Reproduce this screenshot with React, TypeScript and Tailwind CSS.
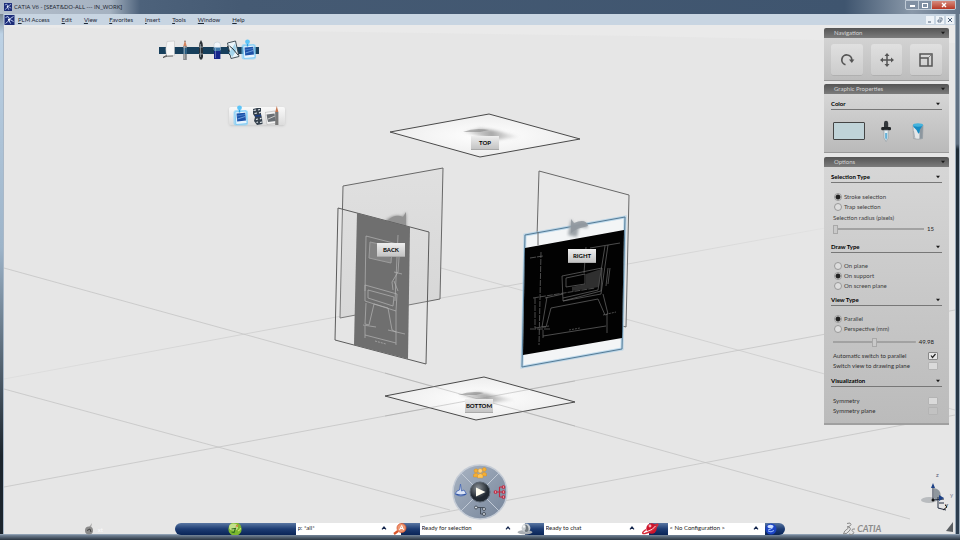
import React from 'react';

type Point = { x: number; y: number };

const SCENE = { x: 4, y: 25, width: 951, height: 509 };

const MENUS = ['PLM Access', 'Edit', 'View', 'Favorites', 'Insert', 'Tools', 'Window', 'Help'];

const PLANE_LABELS = [
    { name: 'TOP', x: 471, y: 136 },
    { name: 'BACK', x: 377, y: 243 },
    { name: 'RIGHT', x: 568, y: 249 },
    { name: 'BOTTOM', x: 465, y: 399 },
];

const place = ({ x, y }: Point) => ({
    left: `${((x - SCENE.x) / SCENE.width) * 100}%`,
    top: `${((y - SCENE.y) / SCENE.height) * 100}%`,
});

/* ---------- icons ---------- */

const AppIcon = () => (
    <svg viewBox="0 0 10 10" className="h-full w-full" aria-hidden="true">
        <rect width="10" height="10" fill="#1c2c78" />
        <path d="M1 2.5L3.5 1.5L5 4L9 1.5M1 8.500L4.500 5.500L6 8.500M5.500 4.500L9 6.500" fill="none" stroke="#b9c8ee" strokeWidth="1" />
        <circle cx="4.5" cy="4.8" r="1.1" fill="#fff" />
    </svg>
);

const PaperIcon = () => (
    <svg viewBox="0 0 16 22" className="h-[22px] w-4" aria-hidden="true">
        <path d="M6 2.500L13.500 2V16.500L5.500 17.500Q4 9 6 2.500Z" fill="#f6f6f6" stroke="#bdbdbd" strokeWidth=".5" />
        <path d="M2 18.5Q6 16.500 12 17M2 18.5L6 16" fill="none" stroke="#333" strokeWidth=".7" />
    </svg>
);

const PencilIcon = () => (
    <svg viewBox="0 0 16 22" className="h-[22px] w-4" aria-hidden="true">
        <path d="M8 1L9.8 7.500H6.2Z" fill="#d2825c" />
        <path d="M8 1L8.5 3H7.5Z" fill="#444" />
        <rect x="6.2" y="7" width="3.6" height="14" fill="#85888b" />
        <rect x="6.2" y="9" width="3.6" height="6" fill="#245a80" />
        <path d="M7.3 7V20" stroke="#c4c4c4" strokeWidth=".7" />
    </svg>
);

const PenIcon = () => (
    <svg viewBox="0 0 16 22" className="h-[22px] w-4" aria-hidden="true">
        <path d="M8 1L9.500 4L10 8V18L9 20.5H7L6 18V8L6.500 4Z" fill="#2b3238" />
        <path d="M7.500 5V18" stroke="#8d989f" strokeWidth=".8" />
        <path d="M6 8H10M6 15H10" stroke="#a9b4bc" strokeWidth=".7" />
    </svg>
);

const EraserIcon = () => (
    <svg viewBox="0 0 16 22" className="h-[22px] w-4" aria-hidden="true">
        <path d="M5 11V5.500Q5 3 8.200 3T11.400 5.500V11Z" fill="#f2f6fa" stroke="#b9c5cf" strokeWidth=".5" />
        <path d="M5 8.500H11.400V13H5Z" fill="#3f78a8" />
        <path d="M5 12H11.400V20H5Z" fill="#16268c" />
        <path d="M6.500 9V19" stroke="#fff" strokeOpacity=".3" />
    </svg>
);

const NotebookIcon = () => (
    <svg viewBox="0 0 16 22" className="h-[22px] w-4" aria-hidden="true">
        <path d="M2.5 4L10.5 2L14 17.5L6 19.5Z" fill="#eaf4f9" stroke="#33424c" strokeWidth=".9" />
        <path d="M4 14L10 4.500L11.500 11L7.500 18Z" fill="#a5d5ec" />
        <path d="M4.500 7L8 10L13 16" stroke="#222" strokeWidth=".9" fill="none" />
        <path d="M3 7L2 8M4 11L3 12M5 15L4 16" stroke="#222" strokeWidth=".8" />
    </svg>
);

const PinnedIcon = () => (
    <svg viewBox="0 0 16 22" className="h-[22px] w-4" aria-hidden="true">
        <rect x=".5" y="5" width="14.5" height="15.5" rx="2.5" fill="#7fd0fb" opacity=".6" />
        <path d="M2 7L13 6L14 18.500L3 19.5Z" fill="#e9f5fd" stroke="#5fc0f5" strokeWidth=".6" />
        <path d="M3.500 8.500L12.200 7.700L13 15.500L4.200 16.500Z" fill="#1c51a8" />
        <path d="M4.500 14L12.2 11.500" stroke="#83b4ea" strokeWidth=".8" />
        <path d="M4 11L12 9.500" stroke="#4c86d0" strokeWidth=".8" />
        <circle cx="6.5" cy="2.8" r="2.4" fill="#5cc4f8" />
        <path d="M6.5 5V7.5" stroke="#2f9ce0" strokeWidth="1.4" />
    </svg>
);

const KnotIcon = () => (
    <svg viewBox="0 0 16 22" className="h-[22px] w-4" aria-hidden="true">
        <path d="M4 4L8 3L12 3L12 9L13 13L13.500 19L8 20L5 16L6 12L4 9Z" fill="#35414d" />
        <path d="M4.500 5.500L7 5M9 5L11 4.500M5.500 8.500L8 8M10 8L12 7M7 14.500L9 14M11 14L12.500 13M7.500 17.500L9 17M11 17.500L13 17" stroke="#e8edf1" strokeWidth="1.200" />
        <path d="M6 11L12 10.500" stroke="#1d3f86" strokeWidth="1.4" />
    </svg>
);

const SketchIcon = () => (
    <svg viewBox="0 0 16 22" className="h-[22px] w-4" aria-hidden="true">
        <path d="M0 7.500L10 6L12.500 18L2 19.500Z" fill="#f3f3f3" stroke="#aaa" strokeWidth=".5" />
        <path d="M1.500 9.500L9.500 8.500L11 16L3 17Z" fill="#6a6f74" />
        <path d="M3 14L10 11" stroke="#c9c9c9" strokeWidth="1" />
        <path d="M10.200 7H13.400V20H10.200Z" fill="#777" />
        <path d="M11.800 1L13.400 7H10.200Z" fill="#c57650" />
    </svg>
);

const RotateIcon = () => (
    <svg viewBox="0 0 16 16" className="size-4" aria-hidden="true">
        <path d="M6.500 12.800A5 5 0 1 1 12.800 8" fill="none" stroke="#555" strokeWidth="1.7" />
        <path d="M10 7.500H15.400L12.800 10.900Z" fill="#555" />
    </svg>
);

const MoveIcon = () => (
    <svg viewBox="0 0 16 16" className="size-4" aria-hidden="true">
        <path d="M8 3V13M3 8H13" stroke="#555" strokeWidth="1.5" />
        <path d="M8 1L10.500 4H5.500ZM8 15L10.500 12H5.500ZM1 8L4 5.500V10.500ZM15 8L12 5.500V10.500Z" fill="#555" />
    </svg>
);

const ScaleIcon = () => (
    <svg viewBox="0 0 16 16" className="size-4" aria-hidden="true">
        <path d="M2 2H14V14H2ZM2 6H10V14" fill="none" stroke="#555" strokeWidth="1.500" />
        <path d="M10 6L13.500 2.500" stroke="#777" strokeWidth=".9" />
    </svg>
);

const DropperIcon = () => (
    <svg viewBox="0 0 12 22" className="h-[22px] w-3" aria-hidden="true">
        <path d="M4 7V3Q4 .8 6 .8T8.200 3V7Z" fill="#33373b" />
        <rect x="1.200" y="7" width="9.800" height="3.200" rx="1.300" fill="#222528" />
        <path d="M4 10.200H8.200V18L6.100 21.500L4 18Z" fill="#e4eef3" stroke="#8b979e" strokeWidth=".6" />
        <path d="M5.100 13H7.200V18L6.100 20L5.100 18Z" fill="#66b1d6" />
    </svg>
);

const PaintIcon = () => (
    <svg viewBox="0 0 12 18" className="h-[18px] w-3" aria-hidden="true">
        <path d="M1 3L1.500 16.500Q6 18 10.500 16.500L11 3Z" fill="#e4e6e8" stroke="#8a9095" strokeWidth=".6" />
        <path d="M7.500 5V17L10.500 16.500L11 4Z" fill="#8d979f" />
        <path d="M1.500 9L3 17" stroke="#9aa3aa" strokeWidth=".8" />
        <path d="M1 3Q6 5 11 3L8 7.500Q7.500 13 6 11L4.500 8L1.500 5Z" fill="#168bc4" />
        <ellipse cx="6" cy="3" rx="5" ry="1.700" fill="#45b3dc" />
    </svg>
);

const Caret = () => (
    <svg viewBox="0 0 6 4" className="h-1 w-1.5" aria-hidden="true">
        <path d="M1 .8H5L3 3.200Z" fill="#1a1a1a" />
    </svg>
);

const UpCaret = () => (
    <svg viewBox="0 0 6 4" className="h-1 w-1.5" aria-hidden="true">
        <path d="M1 3.300L3 1L5 3.300" fill="none" stroke="#14264d" strokeWidth="1.200" />
    </svg>
);

const GlobeIcon = () => (
    <svg viewBox="0 0 14 14" className="size-3.5" aria-hidden="true">
        <circle cx="7" cy="7" r="6.700" fill="#7cb82f" />
        <ellipse cx="5.500" cy="5" rx="4.500" ry="3.500" fill="#d9efaa" opacity=".75" />
        <path d="M3.500 7L7.500 6.500L6 10.500L3.500 10" fill="none" stroke="#2f6d1f" strokeWidth="1.100" />
        <path d="M7.500 5L10.500 2.500M8 3L10 5" stroke="#e0703a" strokeWidth=".8" />
        <path d="M10 9Q12.500 8 12.500 6" stroke="#c9e66d" strokeWidth="1.200" fill="none" />
    </svg>
);

const SearchIcon = () => (
    <svg viewBox="0 0 14 12" className="h-3 w-3.5" aria-hidden="true">
        <path d="M1 11L5 8" stroke="#d8552b" strokeWidth="2.200" />
        <circle cx="8.500" cy="5" r="4.500" fill="#ee9672" stroke="#d9572d" strokeWidth=".8" />
        <path d="M6.500 7L8.700 2.500L10.500 7M7 5.500H10" fill="none" stroke="#fff" strokeWidth="1" />
    </svg>
);

const AgentIcon = () => (
    <svg viewBox="0 0 16 12" className="h-3 w-4" aria-hidden="true">
        <ellipse cx="8" cy="9.300" rx="7.500" ry="2.200" fill="#a9aeb3" />
        <circle cx="9" cy="5" r="4.400" fill="#c9ced2" />
        <path d="M8 1.500Q12 2 11.500 8Q9 10 7.500 8Q10 5 8 1.500Z" fill="#71797f" />
        <circle cx="7" cy="3.500" r="1.200" fill="#f5f6f7" />
    </svg>
);

const PlanetIcon = () => (
    <svg viewBox="0 0 18 12" className="h-3 w-[18px]" aria-hidden="true">
        <circle cx="10.500" cy="5.500" r="5.200" fill="#cf142c" />
        <path d="M14 2Q18 .2 16.500 2.500Q12 8.500 4 10.500Q.2 11 2.500 8.500L5 6.500" fill="none" stroke="#d52a3a" strokeWidth="1.400" />
        <path d="M6 8.500Q12 7 14.500 3" fill="none" stroke="#fff" strokeWidth=".9" />
        <circle cx="9" cy="3" r="1.400" fill="#f4b4b9" />
    </svg>
);

const BallIcon = () => (
    <svg viewBox="0 0 12 12" className="size-3" aria-hidden="true">
        <circle cx="6" cy="6" r="5.500" fill="#1c44c4" />
        <ellipse cx="5.500" cy="3.500" rx="3" ry="1.800" fill="#cfe0ff" />
        <path d="M3 7Q6 6.500 8 4.500M3 8Q6 10 9 7.500" fill="none" stroke="#9fc0ff" strokeWidth="1" />
    </svg>
);

const DsMark = () => (
    <svg viewBox="0 0 14 14" className="size-3.5" aria-hidden="true">
        <path d="M5 1.500Q9 0 9 2.500Q8.500 4.500 5 5Q9.500 5 8 8Q5 12.500 1.500 12Q1.500 9 6.500 6M13 7Q9.500 6.500 10 8.500Q13 10.500 11 12Q9.500 13 7 12" fill="none" stroke="#8b8b8b" strokeWidth="1" />
    </svg>
);

/* ---------- 3D scene ---------- */

const Scene = () => (
    <svg
        viewBox="4 25 951 509"
        preserveAspectRatio="none"
        className="absolute inset-0 h-full w-full"
        role="img"
        aria-label="Seat sketch planes"
    >
        <defs>
            <radialGradient id="sheet">
                <stop offset="0" stopColor="#ffffff" />
                <stop offset="1" stopColor="#ededed" />
            </radialGradient>
            <linearGradient id="rear" x1="0" y1="0" x2="0" y2="1">
                <stop offset="0" stopColor="#e0e0e0" />
                <stop offset="1" stopColor="#d6d6d6" />
            </linearGradient>
            <linearGradient id="smoke" x1="0" y1="0" x2="1" y2="0">
                <stop offset="0" stopColor="#707070" stopOpacity=".1" />
                <stop offset=".5" stopColor="#707070" stopOpacity=".6" />
                <stop offset="1" stopColor="#909090" stopOpacity=".05" />
            </linearGradient>
            <linearGradient id="fadeOut" gradientUnits="userSpaceOnUse" x1="4" y1="0" x2="955" y2="0">
                <stop offset="0" stopColor="#c6c6c6" stopOpacity=".3" />
                <stop offset=".4" stopColor="#c6c6c6" />
                <stop offset=".6" stopColor="#c6c6c6" />
                <stop offset=".85" stopColor="#c6c6c6" stopOpacity=".2" />
            </linearGradient>
            <filter id="soft">
                <feGaussianBlur stdDeviation="1.500" />
            </filter>
        </defs>

        <path d="M4 25H955V43L640 36L4 27Z" fill="#eaeaea" />

        {/* ground grid */}
        <g stroke="#c4c4c4" strokeWidth=".8" fill="none">
            <path d="M4 487L955 310" />
            <path d="M4 268L370 369L707 463L910 519" />
            <path d="M4 389L229 450L450 510" />
            <path d="M420 517L955 415" />
            <path d="M4 379L320 320L480 291L825 228" stroke="url(#fadeOut)" />
            <path d="M430 265L955 410" strokeOpacity=".8" />
        </g>

        {/* top and bottom */}
        <g stroke="#4a4a4a" strokeWidth="1">
            <path d="M390 132L489 114L580 139L480 157Z" fill="url(#sheet)" />
            <path d="M385 396L484 377L575 402L476 420Z" fill="url(#sheet)" />
        </g>
        <g filter="url(#soft)">
            <path d="M463 132L480 128L498 131L520 137L495 140Z" fill="url(#smoke)" />
            <path d="M458 395L478 392L498 396L516 400L490 403Z" fill="url(#smoke)" />
        </g>
        <path d="M463 132Q475 127 489 130L480 132Z" fill="#777" opacity=".5" />
        <path d="M458 395Q472 390 484 393L476 395Z" fill="#777" opacity=".5" />
        <path d="M385 416L575 381M385 373L575 426" stroke="#999" strokeOpacity=".5" strokeWidth=".8" />

        {/* left pair */}
        <path d="M343 186L443 168L440 299L340 318Z" fill="url(#rear)" stroke="#686868" />
        <path d="M385 221Q395 213 403 217L406 212V228L395 225Z" fill="#8a8a8a" filter="url(#soft)" />
        <path d="M387 221Q395 213 403 217L406 212V228L395 225Z" fill="#929292" />
        <path d="M338 208L429 232L426 364L335 340Z" fill="#e6e6e6" fillOpacity=".15" stroke="#5c5c5c" />
        <path d="M357 213L410 227L408 359L354 345Z" fill="#6f6f6f" />
        <g fill="none" stroke="#b4b4b4" strokeWidth=".7">
            <path d="M366 236L401 245M366 236L365 291M370 242L392 247L391 263L369 258Z" />
            <path d="M398 235L395 301M400 244L398 272L392 282L393 290" />
            <path d="M394 272L402 274M394 281L398 291" />
            <path d="M365 285L397 294L396 311L365 301ZM368 290L394 297L393 306L368 298Z" />
            <path d="M366 303L365 324L369 325L374 304L388 308L392 330L396 332L396 311" />
            <path d="M363 325L376 327M388 330L405 334M365 335L396 343M365 326V338M396 332V345" />
            <path d="M375 341L386 344" strokeDasharray="2 1" />
        </g>
        <path d="M370 242L380 244L378 250L391 258V263L369 258Z" fill="#969696" opacity=".5" />

        {/* right pair */}
        <path d="M539 171L629 195L626 327L535 303Z" fill="#e8e8e8" fillOpacity=".8" stroke="#686868" />
        <path d="M525 235L625 217L622 349L522 367Z" fill="#f3f5f6" stroke="#9ac6e5" strokeWidth="3" strokeOpacity=".6" />
        <path d="M525 235L625 217L622 349L522 367Z" fill="none" stroke="#557b96" />
        <path d="M571 219L574 225Q586 218 588 228L579 227L577 237L568 235Z" fill="#9ca3a8" filter="url(#soft)" />
        <path d="M571 219L574 223Q586 218 588 226L577 229L571 233Z" fill="#8f979d" opacity=".85" />
        <path d="M525 248L624 230L622 338L523 355Z" fill="#020202" />
        <path d="M538 232V245" stroke="#686868" />
        <g fill="none" stroke="#6c6c6c" strokeWidth=".7">
            <path d="M530 258L543 256M541 252L539 345M533 298L595 288M535 298V328L549 326M530 329H550" strokeDasharray="6 1" />
            <path d="M562 276L602 268L601 291L563 301ZM566 278L585 274V284L566 287Z" />
            <path d="M605 246L598 290L563 298M608 245L601 294L563 301M590 248L620 243" />
            <path d="M608 268L606 286M610 268L608 284M584 273L586 247" />
            <path d="M547 297L542 327L546 327L551 308L598 299L605 315L608 314L603 294" />
            <path d="M545 298L563 294M543 336L606 326M543 330V338M607 315V333" />
            <path d="M603 315L616 312M569 330L580 328" strokeDasharray="2 1" />
        </g>
        <path d="M586 274L601 269L599 287L572 291V287L586 284Z" fill="#484848" opacity=".65" />
    </svg>
);

const AxisTriad = () => (
    <svg viewBox="0 0 38 62" className="absolute right-0 bottom-0 h-[62px] w-[38px] overflow-visible" aria-hidden="true">
        <ellipse cx="12" cy="28" rx="8" ry="3" fill="#b9bcbf" />
        <path d="M17 16Q24 17 24 25L20 29L17 26Z" fill="#8f979e" />
        <path d="M16 28V14M21 25L21 36L29 38M16 28L27 27M22 31H27" stroke="#222c40" strokeWidth="1" fill="none" />
        <path d="M16 11L18 16H14Z" fill="#1d4186" />
        <path d="M22 23L27 26L22 29Z" fill="#1d4186" />
        <circle cx="16" cy="28" r="1.500" fill="#111" />
        <path d="M26 38L30 35L28 33" stroke="#222" fill="none" />
        <text x="19" y="5" fontSize="6" fill="#59607a">z</text>
        <text x="33" y="25" fontSize="6" fill="#7d8494">y</text>
        <text x="28" y="35" fontSize="6" fill="#222">y</text>
        <path d="M29 59L36 50V60Z" fill="#5b5f63" />
    </svg>
);

const Compass = () => (
    <svg viewBox="0 0 56 56" className="absolute bottom-[14px] left-1/2 size-14 -translate-x-1/2" role="img" aria-label="Compass">
        <defs>
            <linearGradient id="ring" x1="0" y1="0" x2="1" y2="1">
                <stop offset="0" stopColor="#a9b4c3" />
                <stop offset="1" stopColor="#76859a" />
            </linearGradient>
            <radialGradient id="hub" cx=".4" cy=".3">
                <stop offset="0" stopColor="#8c9298" />
                <stop offset="1" stopColor="#202830" />
            </radialGradient>
        </defs>
        <circle cx="28" cy="28" r="27" fill="url(#ring)" stroke="#c5ccd6" strokeWidth="1.500" />
        <path d="M9 9L47 47M47 9L9 47" stroke="#c2cad6" strokeWidth="1" />
        <circle cx="28" cy="28" r="10" fill="url(#hub)" stroke="#5b6571" />
        <path d="M24 23.500V32.500L33.500 28Z" fill="#fffdf0" />
        <g fill="#f4ae36" stroke="#d18a1c" strokeWidth=".4">
            <path d="M30 12V9.500Q32 7 34.500 9.500V12Z" />
            <circle cx="32.300" cy="5.500" r="2" />
            <path d="M21.500 13V10.500Q24 7.500 26.500 10.500V13Z" />
            <circle cx="24" cy="6.800" r="2" />
            <path d="M25.500 14V11Q28.300 8 31 11V14Z" fill="#ffc65a" />
            <circle cx="28.200" cy="6.800" r="2.200" fill="#ffd37c" />
        </g>
        <path d="M3 30Q9 34 14.500 30L12 26L9.500 27L8.500 20L7.500 26L5 27Z" fill="#dbe4f7" stroke="#4c6cb5" strokeWidth=".9" />
        <path d="M4 30Q9 32 14 30" stroke="#2c4f9f" strokeWidth="1.200" fill="none" />
        <g fill="#f4c6cc" stroke="#c02840" strokeWidth="1.100">
            <path d="M43 28H50M47.500 23V33M47.500 23H51M47.500 33H51" />
            <circle cx="43.500" cy="28" r="1.300" />
            <circle cx="51.500" cy="23" r="1.300" />
            <circle cx="51.500" cy="28" r="1.300" />
            <circle cx="51.500" cy="33" r="1.300" />
        </g>
        <g fill="#d7dce2" stroke="#3f4a55" strokeWidth=".9">
            <path d="M24 43.500H32M28.500 43.500V50H32" fill="none" />
            <circle cx="24" cy="43.500" r="1.500" />
            <circle cx="32" cy="45" r="1.500" />
            <circle cx="32" cy="50" r="1.500" />
        </g>
    </svg>
);

/* ---------- side panel ---------- */

type ChildrenProps = { children: React.ReactNode };

const PanelTitle = ({ children }: ChildrenProps) => (
    <h2 className="flex h-[10px] items-center justify-between rounded-t-[2px] bg-gradient-to-b from-[#555555] to-[#7c7c7c] pr-[3px] pl-[10px] text-[6px] leading-[10px] text-[#d5d5d5]">
        {children}
        <Caret />
    </h2>
);

const SectionTitle = ({ children }: ChildrenProps) => (
    <h3 className="flex h-[12px] items-center justify-between border-b border-[#777777] pr-px text-[6px] leading-[10px] font-bold text-black">
        {children}
        <Caret />
    </h3>
);

const ToolButton = ({ label, children }: ChildrenProps & { label: string }) => (
    <button
        type="button"
        aria-label={label}
        className="flex h-8 flex-1 items-center justify-center rounded-[3px] border-b border-[#b0b0b0] bg-gradient-to-b from-[#e0e0e0] to-[#cccccc]"
    >
        {children}
    </button>
);

const Radio = ({ name, label, checked = false }: { name: string; label: string; checked?: boolean }) => (
    <label className="flex h-[10px] items-center gap-[2px] pl-[3px]">
        <input
            type="radio"
            name={name}
            defaultChecked={checked}
            className="size-2 appearance-none rounded-full border border-[#999999] bg-[#dddddd] checked:bg-[radial-gradient(circle,#222222_0_2px,#dddddd_3px)]"
        />
        {label}
    </label>
);

const Check = ({ label, checked = false, muted = false }: { label: string; checked?: boolean; muted?: boolean }) => (
    <label className="flex h-[10px] items-center justify-between pr-1 pl-[2px] text-[#303030]">
        {label}
        <span className="relative flex">
            <input
                type="checkbox"
                defaultChecked={checked}
                disabled={muted}
                className="peer h-2 w-[10px] appearance-none rounded-[1px] border border-[#b4b4b4] bg-[#dadada] checked:border-[#888888] checked:bg-[#e8e8e8] disabled:bg-[#c2c2c2]"
            />
            <svg viewBox="0 0 10 8" className="pointer-events-none absolute inset-0 hidden h-2 w-[10px] peer-checked:block">
                <path d="M3 3.500L4.500 5.500L7.500 2" fill="none" stroke="#222" strokeWidth="1.200" />
            </svg>
        </span>
    </label>
);

const Slider = ({ label, value, max, text }: { label: string; value: number; max: number; text: string }) => (
    <div className="flex h-[10px] items-center gap-[3px] pr-2 pl-[2px]">
        <input
            type="range"
            aria-label={label}
            defaultValue={value}
            max={max}
            className="h-[10px] min-w-0 flex-1 appearance-none bg-[linear-gradient(#a2a2a2,#a2a2a2)] bg-[length:100%_2px] bg-center bg-no-repeat [&::-webkit-slider-thumb]:h-[9px] [&::-webkit-slider-thumb]:w-[5px] [&::-webkit-slider-thumb]:appearance-none [&::-webkit-slider-thumb]:border [&::-webkit-slider-thumb]:border-[#a8a8a8] [&::-webkit-slider-thumb]:bg-[#c9c9c9]"
        />
        <output className="text-[#222222]">{text}</output>
    </div>
);

const SidePanel = () => (
    <aside className="relative mt-[3px] mr-[6px] ml-auto w-[125px] text-[6px] leading-[10px] text-[#404040]">
        <PanelTitle>Navigation</PanelTitle>
        <div className="flex gap-2 border-b border-[#999999] bg-gradient-to-b from-[#d3d3d3] to-[#bdbdbd] px-[7px] pt-[6px] pb-1">
            <ToolButton label="Rotate"><RotateIcon /></ToolButton>
            <ToolButton label="Pan"><MoveIcon /></ToolButton>
            <ToolButton label="Zoom"><ScaleIcon /></ToolButton>
        </div>

        <div className="mt-[3px]">
            <PanelTitle>Graphic Properties</PanelTitle>
            <div className="border-b border-[#999999] bg-gradient-to-b from-[#d6d6d6] to-[#bababa] px-[7px] pt-1 pb-[10px]">
                <SectionTitle>Color</SectionTitle>
                <div className="flex items-center pt-[10px] pl-[2px]">
                    <button type="button" aria-label="Current color" className="h-[18px] w-8 rounded-[1px] border border-[#444444] bg-[#c0d3d8]" />
                    <button type="button" aria-label="Pick color" className="ml-[15px]"><DropperIcon /></button>
                    <button type="button" aria-label="Fill color" className="ml-5"><PaintIcon /></button>
                </div>
            </div>
        </div>

        <div className="mt-1">
            <PanelTitle>Options</PanelTitle>
            <div className="border-b-2 border-[#a0a0a0] bg-gradient-to-b from-[#d6d6d6] to-[#bbbbbb] px-[7px] pt-1 pb-[7px]">
                <SectionTitle>Selection Type</SectionTitle>
                <div className="pt-[9px]">
                    <Radio name="selection" label="Stroke selection" checked />
                    <Radio name="selection" label="Trap selection" />
                    <p className="py-px pl-[2px]">Selection radius (pixels)</p>
                    <Slider label="Selection radius" value={0} max={100} text="15" />
                </div>

                <div className="pt-[7px]">
                    <SectionTitle>Draw Type</SectionTitle>
                    <div className="pt-2">
                        <Radio name="draw" label="On plane" />
                        <Radio name="draw" label="On support" checked />
                        <Radio name="draw" label="On screen plane" />
                    </div>
                </div>

                <div className="pt-[3px]">
                    <SectionTitle>View Type</SectionTitle>
                    <div className="pt-2">
                        <Radio name="view" label="Parallel" checked />
                        <Radio name="view" label="Perspective (mm)" />
                    </div>
                    <div className="pt-[3px] pb-1">
                        <Slider label="Perspective" value={50} max={100} text="49.98" />
                    </div>
                    <Check label="Automatic switch to parallel" checked />
                    <Check label="Switch view to drawing plane" />
                </div>

                <div className="pt-1">
                    <SectionTitle>Visualization</SectionTitle>
                    <div className="pt-[9px]">
                        <Check label="Symmetry" />
                        <Check label="Symmetry plane" muted />
                    </div>
                </div>
            </div>
        </div>
    </aside>
);

/* ---------- window chrome ---------- */

const TitleBar = () => (
    <header className="flex h-[14px] items-center bg-[linear-gradient(90deg,#b3becb_0,#a5b2c1_110px,#4d627b_140px,#455a73_240px,#3f556f_88%,#8998a9_95%,#64758a_100%)] pl-1 text-[6px] text-[#17202b]">
        <span className="size-2"><AppIcon /></span>
        <h1 className="ml-[2px] flex-1 font-['Open_Sans',sans-serif] leading-[10px] whitespace-nowrap">CATIA V6 - [SEAT&amp;DO-ALL --- IN_WORK]</h1>
        <div className="mr-1 mb-1 flex h-[10px] overflow-hidden rounded-b-[2px] border border-[#c0cbd6] bg-[#8090a3] text-white">
            <button type="button" aria-label="Minimize" className="flex w-[13px] items-center justify-center border-r border-[#c0cbd6] pt-[2px]">
                <span className="h-[2px] w-[5px] bg-white" />
            </button>
            <button type="button" aria-label="Restore" className="flex w-[13px] items-center justify-center border-r border-[#c0cbd6]">
                <span className="h-[5px] w-[6px] border border-white" />
            </button>
            <button type="button" aria-label="Close" className="flex w-[23px] items-center justify-center bg-gradient-to-b from-[#d58b7e] to-[#b73523]">
                <svg viewBox="0 0 6 6" className="size-1.5"><path d="M1 1L5 5M5 1L1 5" stroke="#fff" strokeWidth="1.400" /></svg>
            </button>
        </div>
    </header>
);

const MenuBar = () => (
    <nav className="flex h-[11px] items-center bg-[#c8d5e2] text-[6px] leading-[10px] text-[#1f2937]">
        <span className="h-[10px] w-[11px]"><AppIcon /></span>
        <ul className="ml-[3px] flex flex-1 gap-3">
            {MENUS.map((menu) => (
                <li key={menu}>
                    <button type="button" className="block">
                        <span className="underline underline-offset-1">{menu[0]}</span>
                        {menu.slice(1)}
                    </button>
                </li>
            ))}
        </ul>
        <div className="flex gap-[2px] pr-px">
            <button type="button" aria-label="Minimize document" className="flex size-2 items-center justify-center bg-[#eef3f8]">
                <svg viewBox="0 0 8 8" className="size-2"><path d="M2 6H5" stroke="#4b5f79" /></svg>
            </button>
            <button type="button" aria-label="Restore document" className="flex size-2 items-center justify-center bg-[#eef3f8]">
                <svg viewBox="0 0 8 8" className="size-2"><path d="M3 2H6V4.500M2 4H5V6H2Z" fill="none" stroke="#4b5f79" strokeWidth=".8" /></svg>
            </button>
            <button type="button" aria-label="Close document" className="flex size-2 items-center justify-center bg-[#eef3f8]">
                <svg viewBox="0 0 8 8" className="size-2"><path d="M2 2L6 6M6 2L2 6" stroke="#4b5f79" /></svg>
            </button>
        </div>
    </nav>
);

const StatusField = ({ label, value, children }: ChildrenProps & { label: string; value: string }) => (
    <div className="flex h-full items-center">
        <div className="flex h-full w-[97px] items-center bg-white pr-[6px] pb-[2px]">
            <input aria-label={label} defaultValue={value} className="h-[10px] min-w-0 flex-1 pl-[2px] text-[6px] leading-[10px] text-[#222222] outline-none" />
            <button type="button" aria-label={`Expand ${label}`}><UpCaret /></button>
        </div>
        {children}
    </div>
);

const FieldEnd = ({ children }: ChildrenProps) => (
    <span className="flex h-full w-[27px] items-center bg-[linear-gradient(90deg,#ffffff_8px,transparent_8px)]">{children}</span>
);

const StatusBar = () => (
    <footer className="relative grid h-3 grid-cols-[1fr_auto_1fr] items-center">
        <div className="flex items-center justify-center gap-1 pl-2 text-[6px] text-[#fafafa]">
            <svg viewBox="0 0 10 12" className="h-3 w-[10px]" aria-hidden="true">
                <path d="M5 4L8 0L7 5Z" fill="#aaa" />
                <circle cx="5" cy="7.500" r="4" fill="#8a8a8a" />
                <path d="M3 7.500L6 6L7 9" stroke="#444" fill="none" />
            </svg>
            <span>xt</span>
        </div>
        <div className="flex h-3 items-center overflow-hidden rounded-full bg-gradient-to-b from-[#5a77a3] via-[#1d3c73] to-[#0a2557]">
            <div className="flex w-[121px] justify-center"><GlobeIcon /></div>
            <StatusField label="Search" value="p: *all*"><FieldEnd><SearchIcon /></FieldEnd></StatusField>
            <StatusField label="Command" value="Ready for selection"><FieldEnd><AgentIcon /></FieldEnd></StatusField>
            <StatusField label="Chat" value="Ready to chat"><FieldEnd><PlanetIcon /></FieldEnd></StatusField>
            <StatusField label="Configuration" value="< No Configuration >">
                <span className="flex w-5"><BallIcon /></span>
            </StatusField>
        </div>
        <div className="flex items-center justify-center gap-px pr-4 text-[9px] leading-3 font-bold text-[#8b8b8b] italic">
            <DsMark />
            CATIA
        </div>
    </footer>
);

const FloatingToolbars = () => (
    <>
        <div className="absolute top-[14px] left-[155px] flex h-[22px] w-[100px] items-center bg-[linear-gradient(#173f5c,#173f5c)] bg-[length:100%_7px] bg-center bg-no-repeat pl-[2px]">
            <button type="button" aria-label="Sheet"><PaperIcon /></button>
            <button type="button" aria-label="Pencil"><PencilIcon /></button>
            <button type="button" aria-label="Pen"><PenIcon /></button>
            <button type="button" aria-label="Eraser"><EraserIcon /></button>
            <button type="button" aria-label="Notebook"><NotebookIcon /></button>
            <button type="button" aria-label="Pinned picture"><PinnedIcon /></button>
        </div>
        <div className="absolute top-[82px] left-[225px] flex h-[18px] w-14 items-center rounded-[2px] bg-gradient-to-b from-[#fafafa] to-[#dcdcdc] pl-1 shadow-sm">
            <button type="button" aria-label="Place picture"><PinnedIcon /></button>
            <button type="button" aria-label="Constraints"><KnotIcon /></button>
            <button type="button" aria-label="Trace picture"><SketchIcon /></button>
        </div>
    </>
);

const App: React.FC = () => {
    return (
        <div className="flex min-h-screen flex-col bg-[#59697b] font-[Lato,'Open_Sans',sans-serif]">
            <TitleBar />
            <div className="flex flex-1">
                <div className="w-1 border-r border-[#a9b8c8] bg-[linear-gradient(#7b8792_0,#bdd2e5_20px,#9db4c9_45%,#1b242c_85%)]" />
                <div className="flex min-w-0 flex-1 flex-col bg-[#e6e6e6]">
                    <MenuBar />
                    <main className="relative flex flex-1 flex-col">
                        <Scene />
                        {PLANE_LABELS.map(({ name, x, y }) => (
                            <button
                                key={name}
                                type="button"
                                style={place({ x, y })}
                                className="absolute flex h-[14px] w-7 items-center justify-center border-b border-[#aaaaaa] bg-gradient-to-b from-[#eeeeee] to-[#c4c4c4] text-[6px] leading-[10px] font-bold text-black"
                            >
                                {name}
                            </button>
                        ))}
                        <FloatingToolbars />
                        <Compass />
                        <AxisTriad />
                        <div className="flex-1">
                            <SidePanel />
                        </div>
                        <StatusBar />
                    </main>
                </div>
                <div className="w-[5px] border-x border-[#9aa9b8] bg-[linear-gradient(#66788b_0,#5d6d7e_25%,#1d2a35_26%,#2d3e50_100%)]" />
            </div>
            <div className="h-[6px] border-t border-[#8fa0b2] bg-gradient-to-b from-[#76879a] to-[#2b3642]" />
        </div>
    );
};

export default App;
